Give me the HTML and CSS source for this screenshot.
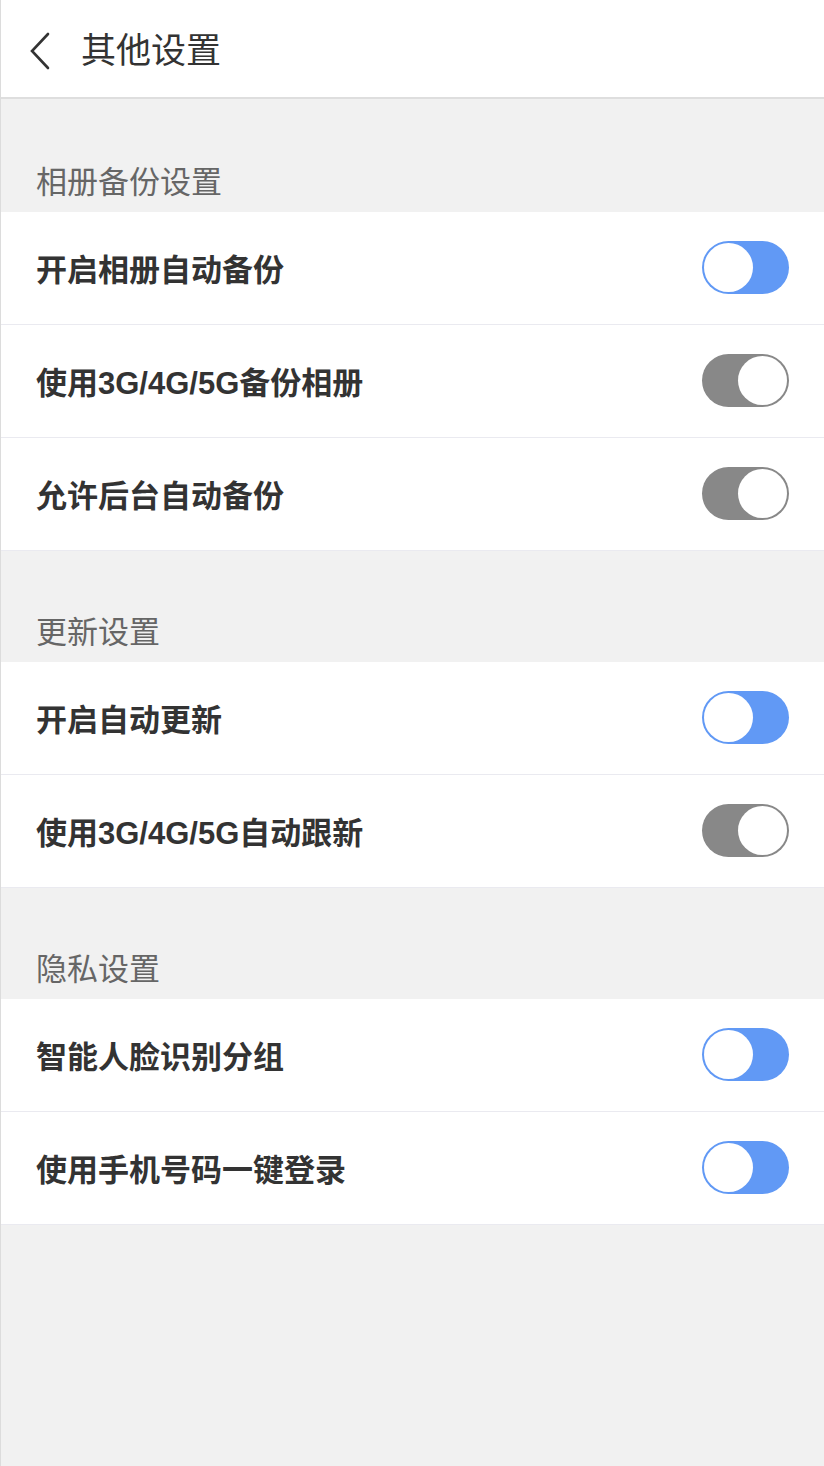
FILE: index.html
```html
<!DOCTYPE html>
<html lang="zh-CN">
<head>
    <meta charset="UTF-8">
    <meta name="viewport" content="width=device-width, initial-scale=1.0">
    <title>其他设置</title>
    <link rel="stylesheet" href="styles.css">
</head>
<body>
    <div class="page">
        <header class="topbar">
            <a class="back" href="#">
                <svg width="24" height="40" viewBox="0 0 24 40">
                    <path d="M18 3 L2 20 L18 37" fill="none" stroke="#333" stroke-width="2.6" stroke-linecap="round" stroke-linejoin="miter"/>
                </svg>
            </a>
            <h1>其他设置</h1>
        </header>

        <section class="group first">
            <h2 class="group-title">相册备份设置</h2>
            <div class="row">
                <span class="label">开启相册自动备份</span>
                <span class="switch on"><span class="knob"></span></span>
            </div>
            <div class="row">
                <span class="label">使用3G/4G/5G备份相册</span>
                <span class="switch"><span class="knob"></span></span>
            </div>
            <div class="row">
                <span class="label">允许后台自动备份</span>
                <span class="switch"><span class="knob"></span></span>
            </div>
        </section>

        <section class="group">
            <h2 class="group-title">更新设置</h2>
            <div class="row">
                <span class="label">开启自动更新</span>
                <span class="switch on"><span class="knob"></span></span>
            </div>
            <div class="row">
                <span class="label">使用3G/4G/5G自动跟新</span>
                <span class="switch"><span class="knob"></span></span>
            </div>
        </section>

        <section class="group">
            <h2 class="group-title">隐私设置</h2>
            <div class="row">
                <span class="label">智能人脸识别分组</span>
                <span class="switch on"><span class="knob"></span></span>
            </div>
            <div class="row">
                <span class="label">使用手机号码一键登录</span>
                <span class="switch on"><span class="knob"></span></span>
            </div>
        </section>
    </div>
</body>
</html>
```

FILE: styles.css
```css
* {
    margin: 0;
    padding: 0;
    box-sizing: border-box;
}

body {
    font-family: 'Liberation Sans', 'Noto Sans CJK SC', sans-serif;
    background: #f1f1f1;
    color: #333;
}

.page {
    min-height: 100vh;
    border-left: 1px solid #dcdcdc;
}

.topbar {
    height: 99px;
    background: #fff;
    border-bottom: 2px solid #dedede;
    display: flex;
    align-items: center;
    padding: 4px 0 0 29px;
}

.back {
    display: flex;
    width: 24px;
    height: 40px;
    margin-right: 27px;
}

.topbar h1 {
    font-size: 35px;
    font-weight: normal;
    line-height: 40px;
    color: #333;
}

.group-title {
    font-size: 31px;
    font-weight: normal;
    line-height: 36px;
    color: #666;
    padding: 64px 35px 11px;
}

.group.first .group-title {
    padding-top: 66px;
}

.row {
    height: 113px;
    background: #fff;
    border-bottom: 1px solid #eaeaf0;
    display: flex;
    align-items: center;
    justify-content: space-between;
    padding: 0 35px 2px 35px;
}

.label {
    font-size: 31px;
    font-weight: bold;
    color: #333;
}

.switch {
    width: 87px;
    height: 53px;
    border-radius: 27px;
    background: #888;
    padding: 2px;
    display: flex;
    justify-content: flex-end;
}

.switch.on {
    background: #6199f5;
    justify-content: flex-start;
}

.knob {
    width: 49px;
    height: 49px;
    border-radius: 50%;
    background: #fff;
}
```
